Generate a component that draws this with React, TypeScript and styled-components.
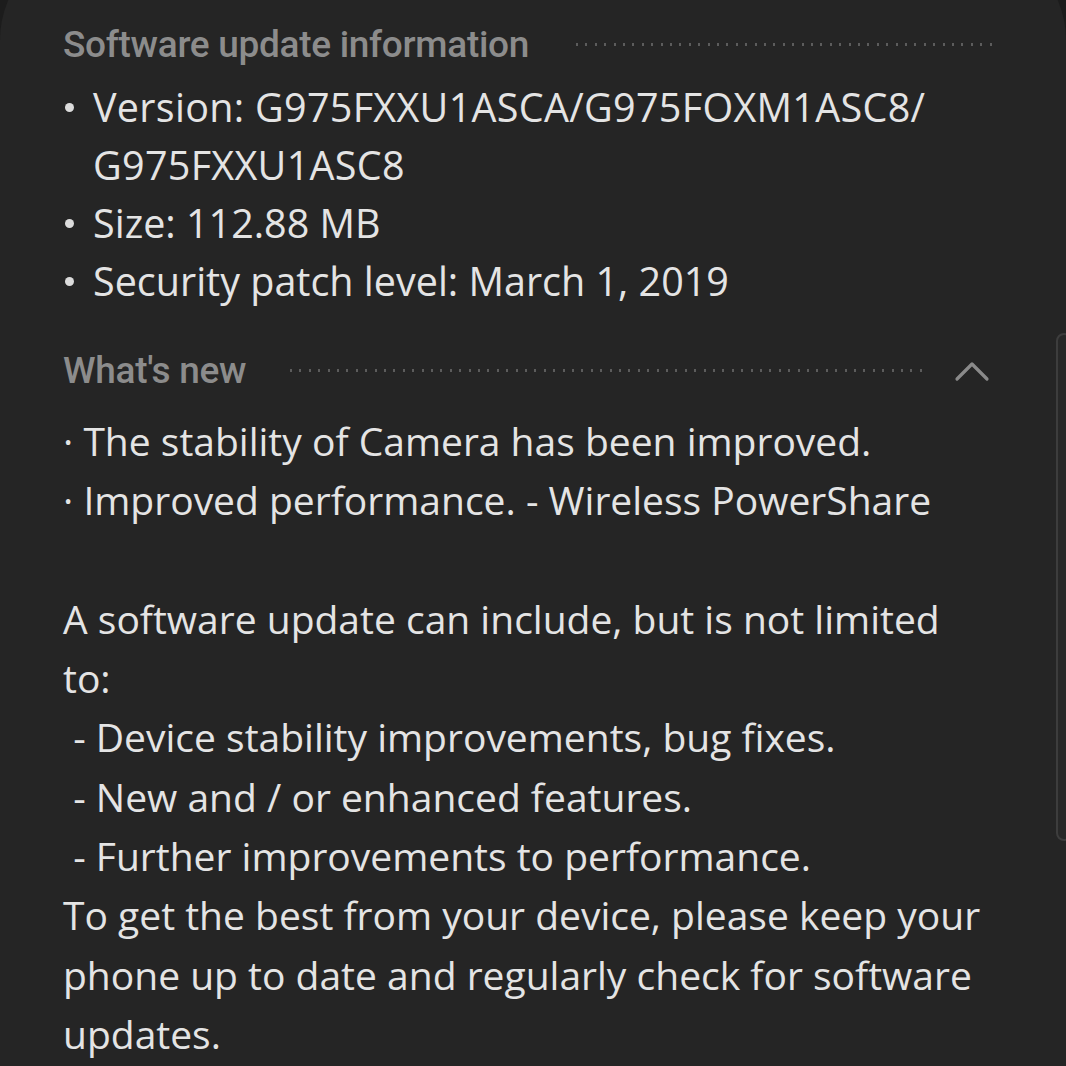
import React from "react";
import styled, { createGlobalStyle } from "styled-components";

const Global = createGlobalStyle`
  html, body { margin: 0; padding: 0; background: #1c1c1c; }
  body { overflow: hidden; }
  #root { width: 1066px; height: 1066px; overflow: hidden; position: relative; }
`;

const Card = styled.div`
  margin-top: -60px;
  height: 1200px;
  background: #252525;
  border-radius: 100px 100px 0 0;
  padding: 75px 68px 0 63px;
  box-sizing: border-box;
  font-family: "Open Sans", "Noto Sans", sans-serif;
  color: #e4e4e4;
`;

const HeaderRow = styled.div<{ $mt?: number; $mb?: number }>`
  display: flex;
  align-items: center;
  height: 58px;
  margin-top: ${(p) => p.$mt ?? 0}px;
  margin-bottom: ${(p) => p.$mb ?? 0}px;
`;

const HeaderTitle = styled.span`
  font-family: "Roboto", "Open Sans", sans-serif;
  font-weight: 500;
  font-size: 37px;
  color: #8c8c8c;
  white-space: nowrap;
  letter-spacing: -0.3px;
`;

const Dots = styled.div<{ $ml: number; $mr: number }>`
  flex: 1;
  height: 3px;
  margin-left: ${(p) => p.$ml}px;
  margin-right: ${(p) => p.$mr}px;
  background: repeating-linear-gradient(to right, #5c5c5c 0 2px, transparent 2px 9.4px);
`;

const Chevron = styled.svg`
  width: 36px;
  height: 24px;
  flex: none;
  margin-right: 8px;
`;

const List = styled.ul`
  list-style: none;
  margin: 0;
  padding: 0;
`;

const Item = styled.li<{ $spacing?: number }>`
  display: flex;
  font-size: 39.5px;
  line-height: 58px;
  letter-spacing: ${(p) => p.$spacing ?? 0}px;
`;

const Bullet = styled.span`
  width: 30px;
  flex: none;
  display: flex;
  align-items: center;
  height: 58px;
  &::before {
    content: "";
    width: 9px;
    height: 9px;
    border-radius: 50%;
    background: #dcdcdc;
    margin-left: 2px;
  }
`;

const Body = styled.div`
  margin-top: 12px;
  font-size: 39px;
  line-height: 59.3px;
`;

const Line = styled.div`
  white-space: pre;
  min-height: 59.3px;
`;

const Scrollbar = styled.div`
  position: absolute;
  right: -6px;
  top: 333px;
  width: 16px;
  height: 508px;
  border: 2px solid #3d3d3d;
  border-radius: 12px;
  background: #282828;
  box-sizing: border-box;
`;

export default function App() {
  return (
    <>
      <Global />
      <Card>
        <HeaderRow $mb={5}>
          <HeaderTitle>Software update information</HeaderTitle>
          <Dots $ml={47} $mr={0} />
        </HeaderRow>
        <List>
          <Item $spacing={0.3}>
            <Bullet />
            <span>
              Version: G975FXXU1ASCA/G975FOXM1ASC8/
              <br />
              G975FXXU1ASC8
            </span>
          </Item>
          <Item>
            <Bullet />
            <span>Size: 112.88 MB</span>
          </Item>
          <Item>
            <Bullet />
            <span>Security patch level: March 1, 2019</span>
          </Item>
        </List>
        <HeaderRow $mt={31}>
          <HeaderTitle>What's new</HeaderTitle>
          <Dots $ml={44} $mr={31} />
          <Chevron viewBox="0 0 36 24">
            <path d="M3 21 L18 6 L33 21" fill="none" stroke="#8a8a8a" strokeWidth="3.2" strokeLinecap="round" strokeLinejoin="round" />
          </Chevron>
        </HeaderRow>
        <Body>
          <Line>· The stability of Camera has been improved.</Line>
          <Line>· Improved performance. - Wireless PowerShare</Line>
          <Line> </Line>
          <Line>A software update can include, but is not limited</Line>
          <Line>to:</Line>
          <Line> - Device stability improvements, bug fixes.</Line>
          <Line> - New and / or enhanced features.</Line>
          <Line> - Further improvements to performance.</Line>
          <Line>To get the best from your device, please keep your</Line>
          <Line>phone up to date and regularly check for software</Line>
          <Line>updates.</Line>
        </Body>
      </Card>
      <Scrollbar />
    </>
  );
}
